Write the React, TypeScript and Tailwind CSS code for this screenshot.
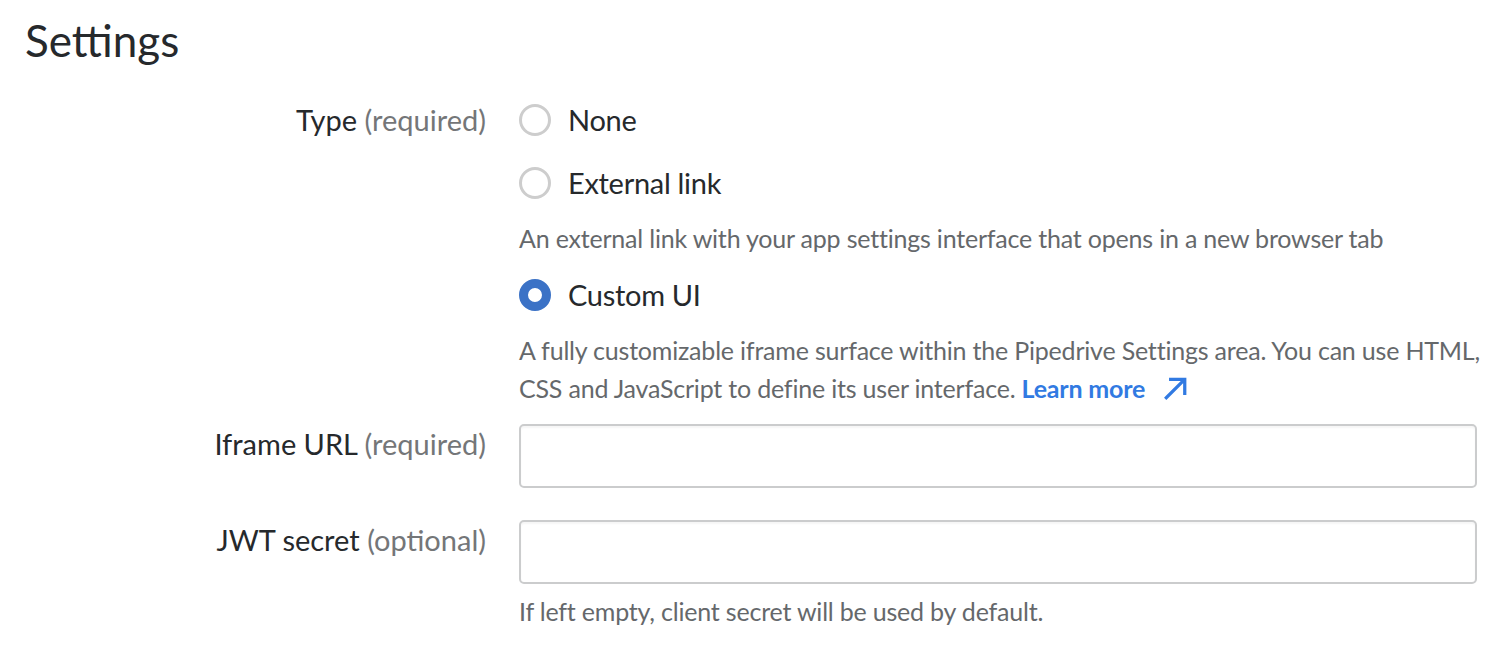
import { useState } from 'react';

type SettingsType = 'none' | 'external' | 'custom';

interface TypeOption {
  value: SettingsType;
  label: string;
  description?: string;
}

const typeOptions: TypeOption[] = [
  { value: 'none', label: 'None' },
  {
    value: 'external',
    label: 'External link',
    description: 'An external link with your app settings interface that opens in a new browser tab',
  },
  { value: 'custom', label: 'Custom UI' },
];

const font = { fontFamily: 'Lato, "Noto Sans", sans-serif' };

const Radio = ({ checked }: { checked: boolean }) =>
  checked ? (
    <span className="w-[32px] h-[32px] rounded-full border-[9px] border-[#3b72c6] bg-white shrink-0" />
  ) : (
    <span className="w-[32px] h-[32px] rounded-full border-[3px] border-[#cdcdcd] bg-white shrink-0" />
  );

const FieldLabel = ({ name, hint }: { name: string; hint: string }) => (
  <div className="w-[486px] shrink-0 text-right text-[29px] leading-[40px] text-[#26292c]">
    {name} <span className="text-[#747678]">{hint}</span>
  </div>
);

const App = () => {
  const [type, setType] = useState<SettingsType>('custom');
  const [iframeUrl, setIframeUrl] = useState('');
  const [jwtSecret, setJwtSecret] = useState('');

  return (
    <div className="min-h-screen bg-white pl-[25px]" style={font}>
      <h1 className="pt-[12px] text-[44px] leading-[56px] text-[#26292c]">Settings</h1>

      <div className="mt-[32px] -ml-[25px]">
        {/* Type */}
        <div className="flex">
          <FieldLabel name="Type" hint="(required)" />
          <div className="ml-[33px] w-[958px]">
            {typeOptions.map((option, i) => (
              <div key={option.value} className={i > 0 ? (option.description ? 'mt-[23px]' : 'mt-[18px]') : ''}>
                <button
                  type="button"
                  onClick={() => setType(option.value)}
                  className="flex items-center h-[40px] gap-[17px] text-[29px] tracking-[-0.3px] text-[#26292c]"
                >
                  <Radio checked={type === option.value} />
                  {option.label}
                </button>
                {option.description && (
                  <p className="mt-[16px] text-[25px] leading-[38px] tracking-[-0.2px] text-[#65686b]">
                    {option.description}
                  </p>
                )}
              </div>
            ))}
            <p className="mt-[16px] whitespace-nowrap text-[25px] leading-[38px] tracking-[-0.2px] text-[#65686b]">
              A fully customizable iframe surface within the Pipedrive Settings area. You can use HTML,
              <br />
              CSS and JavaScript to define its user interface.{' '}
              <a href="#" className="inline-flex items-center gap-[17px] font-bold text-[#317ae2]">
                Learn more
                <svg width="26" height="26" viewBox="0 0 24 24" fill="none" stroke="currentColor" strokeWidth="3" strokeLinecap="square">
                  <path d="M4 21 20 5M8 4h13v13" />
                </svg>
              </a>
            </p>
          </div>
        </div>

        {/* Iframe URL */}
        <div className="flex mt-[17px]">
          <FieldLabel name="Iframe URL" hint="(required)" />
          <div className="ml-[33px] w-[958px]">
            <input
              value={iframeUrl}
              onChange={(e) => setIframeUrl(e.target.value)}
              className="block w-full h-[64px] rounded-[5px] border-2 border-[#cbcccd] px-4 text-[28px] shadow-[inset_0_2px_2px_rgba(0,0,0,0.04)] outline-none"
            />
          </div>
        </div>

        {/* JWT secret */}
        <div className="flex mt-[32px]">
          <FieldLabel name="JWT secret" hint="(optional)" />
          <div className="ml-[33px] w-[958px]">
            <input
              value={jwtSecret}
              onChange={(e) => setJwtSecret(e.target.value)}
              className="block w-full h-[64px] rounded-[5px] border-2 border-[#cbcccd] px-4 text-[28px] shadow-[inset_0_2px_2px_rgba(0,0,0,0.04)] outline-none"
            />
            <p className="mt-[8px] text-[25px] leading-[38px] tracking-[-0.2px] text-[#65686b]">
              If left empty, client secret will be used by default.
            </p>
          </div>
        </div>
      </div>
    </div>
  );
};

export default App;
